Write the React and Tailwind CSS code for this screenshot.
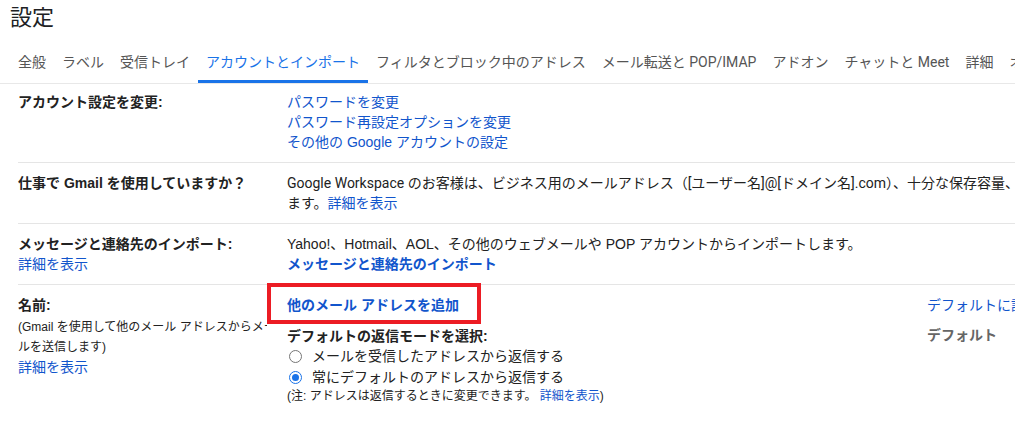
import React from "react";

const tabs = [
  "全般",
  "ラベル",
  "受信トレイ",
  "アカウントとインポート",
  "フィルタとブロック中のアドレス",
  "メール転送と POP/IMAP",
  "アドオン",
  "チャットと Meet",
  "詳細",
  "オフライン",
];

const Radio = ({ checked, children, className = "" }) => (
  <div className={"flex items-center h-5 " + className}>
    {checked ? (
      <span className="w-[13px] h-[13px] rounded-full border-[1.5px] border-[#1a73e8] flex items-center justify-center ml-[2px]">
        <span className="w-[7px] h-[7px] rounded-full bg-[#1a73e8]"></span>
      </span>
    ) : (
      <span className="w-[13px] h-[13px] rounded-full border border-[#767676] ml-[2px]"></span>
    )}
    <span className="ml-[10px]">{children}</span>
  </div>
);

export default function App() {
  return (
    <div className="w-[1015px] h-[422px] overflow-hidden bg-white text-[#222] font-['Liberation_Sans','Noto_Sans_CJK_JP',sans-serif] text-sm">
      <div className="w-[1400px]">
        <h1 className="pl-[10px] pt-1 pb-[10px] text-[22px] leading-[28px] font-normal text-[#202124]">
          設定
        </h1>

        <div className="flex pl-[10px] border-b border-[#e8e8e8] font-['Roboto','Noto_Sans_CJK_JP',sans-serif]">
          {tabs.map((t, i) => (
            <div
              key={t}
              className={
                i === 3
                  ? "px-2 pt-[10px] pb-2 leading-5 border-b-[3px] border-[#1a73e8] text-[#1a73e8]"
                  : "px-2 pt-[10px] pb-2 leading-5 border-b-[3px] border-transparent text-[#555]"
              }
            >
              {t}
            </div>
          ))}
        </div>

        <div className="ml-[18px] leading-5">
          {/* account settings */}
          <div className="flex pt-2 pb-[10px] border-b border-[#e5e5e5]">
            <div className="w-[269px] font-bold">アカウント設定を変更:</div>
            <div className="flex flex-col text-[#1155cc]">
              <span>パスワードを変更</span>
              <span>パスワード再設定オプションを変更</span>
              <span>その他の Google アカウントの設定</span>
            </div>
          </div>

          {/* workspace */}
          <div className="flex py-[10px] border-b border-[#e5e5e5]">
            <div className="w-[269px] shrink-0 font-bold">仕事で Gmail を使用していますか？</div>
            <div className="font-['Roboto','Noto_Sans_CJK_JP',sans-serif] whitespace-nowrap">
              Google Workspace のお客様は、ビジネス用のメールアドレス（[ユーザー名]@[ドメイン名].com）、十分な保存容量、管理ツールなどをご利用いただけ
              <br />
              ます。<span className="text-[#1155cc]">詳細を表示</span>
            </div>
          </div>

          {/* import */}
          <div className="flex py-[10px] border-b border-[#e5e5e5]">
            <div className="w-[269px] shrink-0 flex flex-col">
              <span className="font-bold">メッセージと連絡先のインポート:</span>
              <span className="text-[#1155cc]">詳細を表示</span>
            </div>
            <div className="flex flex-col">
              <span>Yahoo!、Hotmail、AOL、その他のウェブメールや POP アカウントからインポートします。</span>
              <span className="font-bold text-[#1155cc]">メッセージと連絡先のインポート</span>
            </div>
          </div>

          {/* name */}
          <div className="flex py-[10px]">
            <div className="w-[249px] mr-5 shrink-0 overflow-hidden flex flex-col">
              <span className="font-bold">名前:</span>
              <span className="text-xs leading-5 mt-[2px] whitespace-nowrap">
                (Gmail を使用して他のメール アドレスからメー
                <br />
                ルを送信します)
              </span>
              <span className="text-[#1155cc]">詳細を表示</span>
            </div>
            <div className="w-[640px] shrink-0 relative flex flex-col">
              <span className="font-bold text-[#1155cc]">他のメール アドレスを追加</span>
              <span className="mt-3 font-bold leading-[19px]">デフォルトの返信モードを選択:</span>
              <Radio>メールを受信したアドレスから返信する</Radio>
              <Radio checked className="mt-[1px]">
                常にデフォルトのアドレスから返信する
              </Radio>
              <span className="text-xs leading-[18px]">
                (注: アドレスは返信するときに変更できます。 <span className="text-[#1155cc]">詳細を表示</span>)
              </span>
              <div className="absolute left-[-20px] top-[-12px] w-[214px] h-[41px] border-4 border-[#ec1c24]"></div>
            </div>
            <div className="flex flex-col">
              <span className="text-[#1155cc]">デフォルトに設定</span>
              <span className="mt-[10px] font-bold text-[#666]">デフォルト</span>
            </div>
          </div>
        </div>
      </div>
    </div>
  );
}
